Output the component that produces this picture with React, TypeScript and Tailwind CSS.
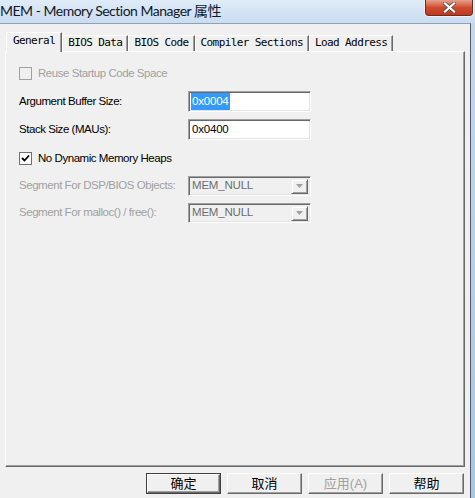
import { useState } from "react";

const tabs = ["General", "BIOS Data", "BIOS Code", "Compiler Sections", "Load Address"];

const ui = { fontFamily: '"Liberation Sans", Arial, sans-serif' };
const mono = { fontFamily: '"DejaVu Sans Mono", "Liberation Mono", monospace' };
const cjk = { fontFamily: '"Liberation Sans", "Noto Sans CJK SC", sans-serif' };

function Check({ checked, disabled }: { checked?: boolean; disabled?: boolean }) {
    return (
        <div
            className={`w-[13px] h-[13px] shrink-0 border flex items-center justify-center ${
                disabled ? "border-[#a0a0a0] bg-[#f0f0f0]" : "border-[#707070] bg-white"
            }`}
        >
            {checked && (
                <svg width="9" height="9" viewBox="0 0 9 9">
                    <path d="M1 4 L3.5 6.5 L8 1.5" stroke="#000" strokeWidth="1.8" fill="none" />
                </svg>
            )}
        </div>
    );
}

function TextBox({ value, selected }: { value: string; selected?: boolean }) {
    return (
        <div className="w-[123px] h-[21px] border border-t-[#a0a0a0] border-l-[#a0a0a0] border-r-white border-b-white">
            <div className="h-full bg-white shadow-[inset_1px_1px_0_#696969,inset_-1px_-1px_0_#e3e3e3] flex items-center pl-[2px] text-[11.5px] tracking-[-0.2px] text-black">
                <span className={selected ? "bg-[#3399ff] text-white px-[1px]" : "px-[1px]"}>{value}</span>
            </div>
        </div>
    );
}

function Combo({ value }: { value: string }) {
    return (
        <div className="w-[123px] h-[20px] border border-t-[#a0a0a0] border-l-[#a0a0a0] border-r-white border-b-white">
            <div className="h-full bg-[#f0f0f0] shadow-[inset_1px_1px_0_#696969,inset_-1px_-1px_0_#e3e3e3] flex items-center pl-[3px] pr-[2px] text-[11.5px] tracking-[-0.2px] text-[#6d6d6d]">
                <span className="flex-1">{value}</span>
                <div className="w-[17px] h-[15px] bg-[#f0f0f0] border border-t-[#f0f0f0] border-l-[#f0f0f0] border-r-[#696969] border-b-[#696969] shadow-[inset_1px_1px_0_#fff,inset_-1px_-1px_0_#a0a0a0] flex items-center justify-center">
                    <svg width="7" height="4" viewBox="0 0 7 4">
                        <path d="M0 0 H7 L3.5 4 Z" fill="#a0a0a0" />
                    </svg>
                </div>
            </div>
        </div>
    );
}

function Btn({ label, def, disabled }: { label: string; def?: boolean; disabled?: boolean }) {
    return (
        <div className={`w-[75px] h-[21px] ${def ? "border border-[#404040]" : ""}`}>
            <div className="h-full bg-[#f0f0f0] border border-t-white border-l-white border-r-[#696969] border-b-[#696969] shadow-[inset_-1px_-1px_0_#a0a0a0] flex items-center justify-center">
                <span className={`text-[13px] ${disabled ? "text-[#a0a0a0]" : "text-black"}`} style={cjk}>
                    {label}
                </span>
            </div>
        </div>
    );
}

export default function App() {
    const [tab, setTab] = useState(0);

    return (
        <div className="w-[475px] h-[498px] overflow-hidden bg-[#bfd6ee] flex flex-col" style={ui}>
            {/* title bar */}
            <div className="relative h-[23px] shrink-0 bg-gradient-to-b from-[#dfebf8] to-[#cadcf0] flex items-center">
                <span
                    className="text-[14px] tracking-[-0.5px] text-[#111827] leading-none -mt-[1px]"
                    style={{ fontFamily: 'Lato, "Noto Sans CJK SC", sans-serif' }}
                >
                    MEM - Memory Section Manager 属性
                </span>
                <div className="absolute right-[2px] top-0 w-[48px] h-[16px] rounded-b-[4px] border border-t-0 border-[#6b2a1e] shadow-[0_0_0_1px_#eaf1f9] bg-gradient-to-b from-[#e6a08d] via-[#cf4a2e] to-[#c0391f] flex items-center justify-center">
                    <svg width="13" height="11" viewBox="0 0 13 11">
                        <path d="M2 1.5 L11 9.5 M11 1.5 L2 9.5" stroke="#4a4a4a" strokeWidth="3.6" strokeLinecap="square" />
                        <path d="M2 1.5 L11 9.5 M11 1.5 L2 9.5" stroke="#fff" strokeWidth="2.2" strokeLinecap="square" />
                    </svg>
                </div>
            </div>

            <div className="flex flex-1">
                {/* client area */}
                <div className="w-[471px] bg-[#f0f0f0] border-r border-r-[#525b66] border-t border-t-[#8da2b8] flex flex-col">
                    {/* tabs */}
                    <div className="flex items-end pl-[6px] h-[27px]">
                        {tabs.map((t, i) => {
                            const sel = i === tab;
                            return (
                                <div
                                    key={t}
                                    onClick={() => setTab(i)}
                                    className={`relative flex items-center justify-center border border-t-white border-l-white border-r-[#696969] border-b-0 text-[11px] tracking-[-0.6px] text-black cursor-default bg-[#f0f0f0] shadow-[inset_-1px_0_0_#a0a0a0] ${
                                        sel ? "h-[20px] px-[6px] -mb-[1px] z-10" : "h-[16px] px-[5px]"
                                    }`}
                                    style={mono}
                                >
                                    <span className={sel ? "-mt-[3px]" : ""}>{t}</span>
                                </div>
                            );
                        })}
                    </div>

                    {/* tab page */}
                    <div className="ml-[5px] w-[460px] h-[416px] border border-t-white border-l-white border-r-[#696969] border-b-[#696969] shadow-[inset_-1px_-1px_0_#a0a0a0] text-[11.5px] tracking-[-0.45px] whitespace-nowrap pl-[13px] pt-[15px]">
                        <div className="flex items-center gap-[6px] h-[13px]">
                            <Check disabled />
                            <span className="text-[#a0a0a0]">Reuse Startup Code Space</span>
                        </div>

                        <div className="flex items-center mt-[11px] h-[21px]">
                            <span className="w-[169px] text-black">Argument Buffer Size:</span>
                            <TextBox value="0x0004" selected />
                        </div>

                        <div className="flex items-center mt-[7px] h-[21px]">
                            <span className="w-[169px] text-black">Stack Size (MAUs):</span>
                            <TextBox value="0x0400" />
                        </div>

                        <div className="flex items-center gap-[6px] mt-[12px] h-[13px]">
                            <Check checked />
                            <span className="text-black">No Dynamic Memory Heaps</span>
                        </div>

                        <div className="flex items-center mt-[11px] h-[20px]">
                            <span className="w-[169px] text-[#a0a0a0]">Segment For DSP/BIOS Objects:</span>
                            <Combo value="MEM_NULL" />
                        </div>

                        <div className="flex items-center mt-[7px] h-[20px]">
                            <span className="w-[169px] text-[#a0a0a0]">Segment For malloc() / free():</span>
                            <Combo value="MEM_NULL" />
                        </div>
                    </div>

                    {/* buttons */}
                    <div className="flex gap-[6px] pl-[146px] pt-[6px]">
                        <Btn label="确定" def />
                        <Btn label="取消" />
                        <Btn label="应用(A)" disabled />
                        <Btn label="帮助" />
                    </div>
                </div>
                <div className="flex-1 bg-gradient-to-b from-[#c4d8ee] to-[#a9c6e6]" />
            </div>
        </div>
    );
}
